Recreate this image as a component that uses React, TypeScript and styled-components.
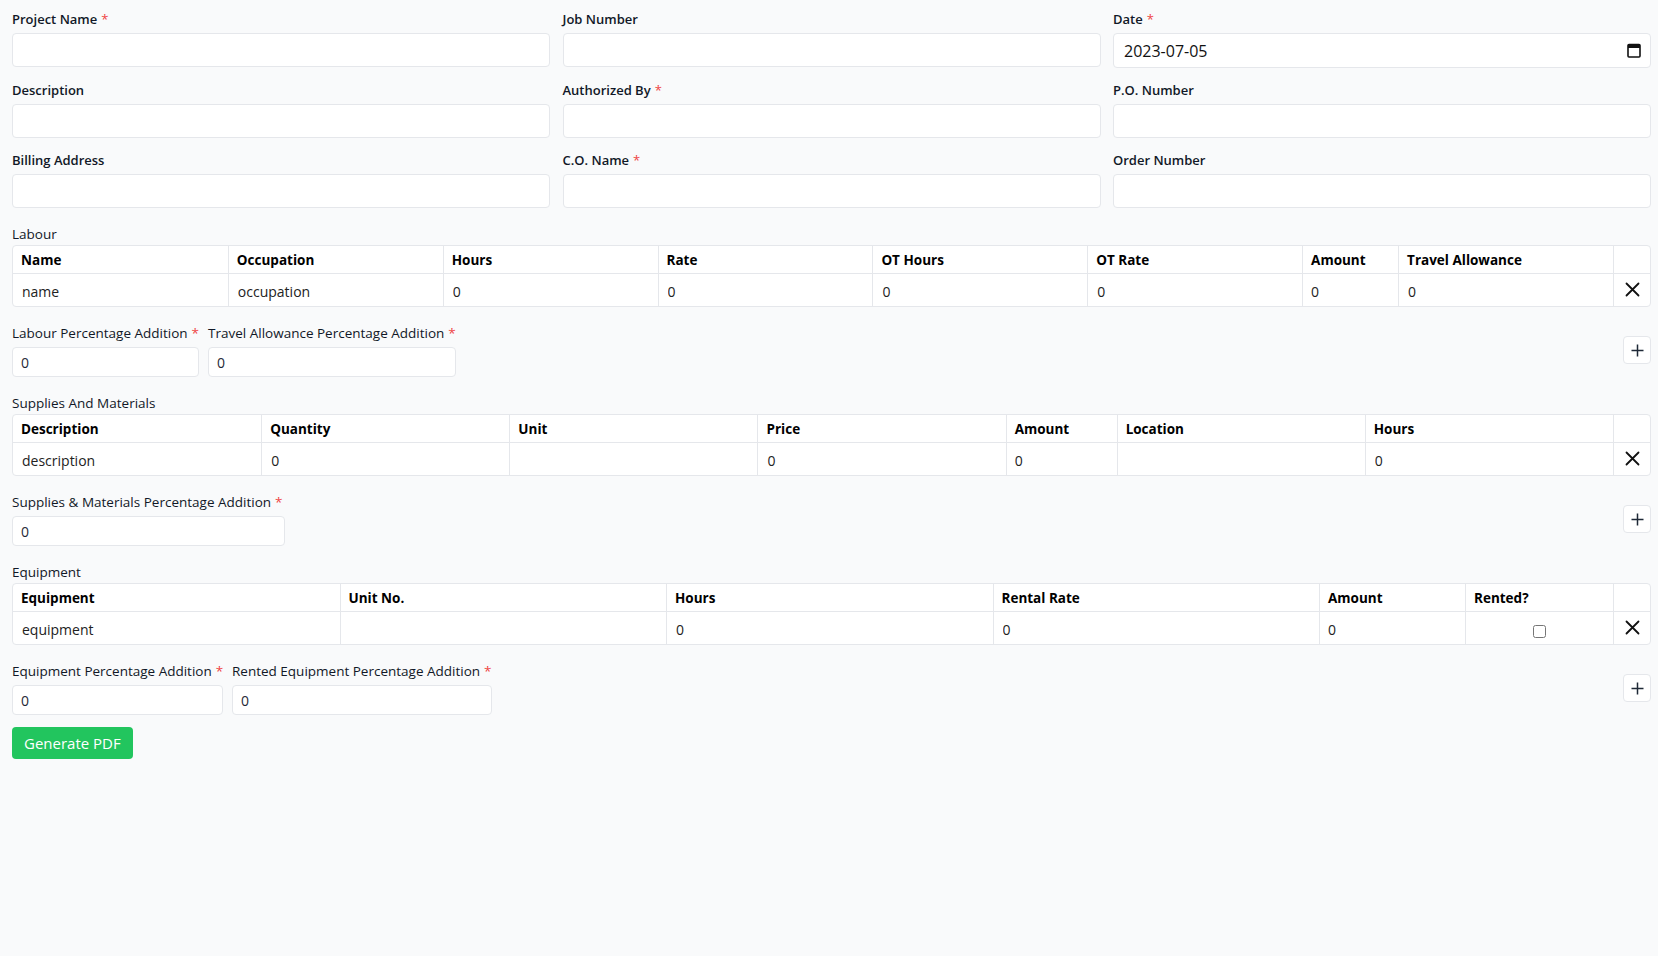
import React from 'react';
import styled, { createGlobalStyle } from 'styled-components';

const GlobalStyle = createGlobalStyle`
  html, body {
    margin: 0;
    padding: 0;
    background: #f9fafb;
  }
  body {
    font-family: 'Open Sans', 'Noto Sans', sans-serif;
    color: #111827;
  }
  * {
    box-sizing: border-box;
  }
`;

type Column = {
  label: string;
  kind: 'input' | 'text' | 'check' | 'remove';
  value?: string;
  width?: number;
};

const labourColumns: Column[] = [
  { label: 'Name', kind: 'input', value: 'name' },
  { label: 'Occupation', kind: 'input', value: 'occupation' },
  { label: 'Hours', kind: 'input', value: '0' },
  { label: 'Rate', kind: 'input', value: '0' },
  { label: 'OT Hours', kind: 'input', value: '0' },
  { label: 'OT Rate', kind: 'input', value: '0' },
  { label: 'Amount', kind: 'text', value: '0', width: 96 },
  { label: 'Travel Allowance', kind: 'input', value: '0' },
  { label: '', kind: 'remove', width: 37 },
];

const supplyColumns: Column[] = [
  { label: 'Description', kind: 'input', value: 'description' },
  { label: 'Quantity', kind: 'input', value: '0' },
  { label: 'Unit', kind: 'input', value: '' },
  { label: 'Price', kind: 'input', value: '0' },
  { label: 'Amount', kind: 'text', value: '0', width: 111 },
  { label: 'Location', kind: 'input', value: '' },
  { label: 'Hours', kind: 'input', value: '0' },
  { label: '', kind: 'remove', width: 37 },
];

const equipmentColumns: Column[] = [
  { label: 'Equipment', kind: 'input', value: 'equipment' },
  { label: 'Unit No.', kind: 'input', value: '' },
  { label: 'Hours', kind: 'input', value: '0' },
  { label: 'Rental Rate', kind: 'input', value: '0' },
  { label: 'Amount', kind: 'text', value: '0', width: 146 },
  { label: 'Rented?', kind: 'check', width: 148 },
  { label: '', kind: 'remove', width: 37 },
];

const CloseIcon = () => (
  <svg width="15" height="15" viewBox="0 0 15 15" fill="none">
    <path d="M1.5 1.5L13.5 13.5M13.5 1.5L1.5 13.5" stroke="#111" strokeWidth="1.8" strokeLinecap="round" />
  </svg>
);

const PlusIcon = () => (
  <svg width="13" height="13" viewBox="0 0 13 13" fill="none">
    <path d="M6.5 0.5V12.5M0.5 6.5H12.5" stroke="#1f2937" strokeWidth="1.5" />
  </svg>
);

const CalendarIcon = () => (
  <svg width="14" height="15" viewBox="0 0 14 15" fill="none">
    <rect x="1" y="1.5" width="12" height="12.5" rx="1" stroke="#111" strokeWidth="1.6" />
    <rect x="1" y="1.5" width="12" height="3.5" fill="#111" />
  </svg>
);

function DataTable({ columns }: { columns: Column[] }) {
  return (
    <Table>
      <colgroup>
        {columns.map((c, i) => (
          <Col key={i} $width={c.width} />
        ))}
      </colgroup>
      <thead>
        <tr>
          {columns.map((c, i) => (
            <HeadCell key={i}>{c.label}</HeadCell>
          ))}
        </tr>
      </thead>
      <tbody>
        <tr>
          {columns.map((c, i) => (
            <BodyCell key={i} $center={c.kind === 'check' || c.kind === 'remove'}>
              {c.kind === 'input' && <CellInput defaultValue={c.value} />}
              {c.kind === 'text' && <CellText>{c.value}</CellText>}
              {c.kind === 'check' && <CheckBox type="checkbox" />}
              {c.kind === 'remove' && (
                <IconButton type="button">
                  <CloseIcon />
                </IconButton>
              )}
            </BodyCell>
          ))}
        </tr>
      </tbody>
    </Table>
  );
}

function Addition({ label, width }: { label: string; width: number }) {
  return (
    <Field $width={width}>
      <LabelText $plain>
        {label}
        <Required>*</Required>
      </LabelText>
      <TextInput $small defaultValue="0" />
    </Field>
  );
}

export default function App() {
  return (
    <>
      <GlobalStyle />
      <Page onSubmit={(e) => e.preventDefault()}>
        <FieldGrid>
          <Field>
            <LabelText>
              Project Name<Required>*</Required>
            </LabelText>
            <TextInput />
          </Field>
          <Field>
            <LabelText>Job Number</LabelText>
            <TextInput />
          </Field>
          <Field>
            <LabelText>
              Date<Required>*</Required>
            </LabelText>
            <DateWrap>
              <DateInput defaultValue="2023-07-05" />
              <CalendarSlot>
                <CalendarIcon />
              </CalendarSlot>
            </DateWrap>
          </Field>
          <Field>
            <LabelText>Description</LabelText>
            <TextInput />
          </Field>
          <Field>
            <LabelText>
              Authorized By<Required>*</Required>
            </LabelText>
            <TextInput />
          </Field>
          <Field>
            <LabelText>P.O. Number</LabelText>
            <TextInput />
          </Field>
          <Field>
            <LabelText>Billing Address</LabelText>
            <TextInput />
          </Field>
          <Field>
            <LabelText>
              C.O. Name<Required>*</Required>
            </LabelText>
            <TextInput />
          </Field>
          <Field>
            <LabelText>Order Number</LabelText>
            <TextInput />
          </Field>
        </FieldGrid>

        <Section>
          <SectionTitle>Labour</SectionTitle>
          <DataTable columns={labourColumns} />
        </Section>
        <AdditionRow>
          <AdditionFields>
            <Addition label="Labour Percentage Addition" width={187} />
            <Addition label="Travel Allowance Percentage Addition" width={248} />
          </AdditionFields>
          <AddButton type="button">
            <PlusIcon />
          </AddButton>
        </AdditionRow>

        <Section>
          <SectionTitle>Supplies And Materials</SectionTitle>
          <DataTable columns={supplyColumns} />
        </Section>
        <AdditionRow>
          <AdditionFields>
            <Addition label="Supplies & Materials Percentage Addition" width={273} />
          </AdditionFields>
          <AddButton type="button">
            <PlusIcon />
          </AddButton>
        </AdditionRow>

        <Section>
          <SectionTitle>Equipment</SectionTitle>
          <DataTable columns={equipmentColumns} />
        </Section>
        <AdditionRow>
          <AdditionFields>
            <Addition label="Equipment Percentage Addition" width={211} />
            <Addition label="Rented Equipment Percentage Addition" width={260} />
          </AdditionFields>
          <AddButton type="button">
            <PlusIcon />
          </AddButton>
        </AdditionRow>

        <Actions>
          <PrimaryButton type="submit">Generate PDF</PrimaryButton>
        </Actions>
      </Page>
    </>
  );
}

const Page = styled.form`
  display: flex;
  flex-direction: column;
  gap: 16px;
  padding: 9px 7px 24px 12px;
  min-height: 956px;
`;

const FieldGrid = styled.div`
  display: grid;
  grid-template-columns: repeat(3, 1fr);
  column-gap: 12.5px;
  row-gap: 12px;
`;

const Field = styled.label<{ $width?: number }>`
  display: flex;
  flex-direction: column;
  gap: 4px;
  width: ${(p) => (p.$width ? `${p.$width}px` : 'auto')};
`;

const LabelText = styled.span<{ $plain?: boolean }>`
  font-size: ${(p) => (p.$plain ? '13.5px' : '13px')};
  line-height: 20px;
  font-weight: ${(p) => (p.$plain ? 400 : 600)};
  color: #111827;
  white-space: nowrap;
`;

const Required = styled.span`
  color: #ef4444;
  font-weight: 400;
  margin-left: 4px;
`;

const TextInput = styled.input<{ $small?: boolean }>`
  width: 100%;
  height: ${(p) => (p.$small ? '30px' : '34px')};
  padding: 0 8px;
  border: 1px solid #e5e7eb;
  border-radius: 4px;
  background: #fff;
  font-family: inherit;
  font-size: 14px;
  color: #1f2937;
  outline: none;
`;

const DateWrap = styled.div`
  position: relative;
`;

const DateInput = styled(TextInput)`
  height: 35px;
  padding: 0 10px;
  font-size: 16px;
  color: #111;
`;

const CalendarSlot = styled.span`
  position: absolute;
  right: 10px;
  top: 10px;
  display: flex;
  pointer-events: none;
`;

const Section = styled.section`
  display: flex;
  flex-direction: column;
  gap: 1px;
`;

const SectionTitle = styled.div`
  font-size: 13.5px;
  line-height: 20px;
  color: #111827;
`;

const Table = styled.table`
  width: 100%;
  table-layout: fixed;
  border-collapse: separate;
  border-spacing: 0;
  background: #fff;
  border: 1px solid #e5e7eb;
  border-radius: 4px;
`;

const Col = styled.col<{ $width?: number }>`
  width: ${(p) => (p.$width ? `${p.$width}px` : 'auto')};
`;

const HeadCell = styled.th`
  height: 28px;
  padding: 0 8px;
  text-align: left;
  font-size: 13.5px;
  line-height: 20px;
  font-weight: 700;
  color: #000;
  border-bottom: 1px solid #e5e7eb;
  white-space: nowrap;
  & + & {
    border-left: 1px solid #e5e7eb;
  }
`;

const BodyCell = styled.td<{ $center?: boolean }>`
  height: 32px;
  padding: 3px 8px 0;
  font-size: 14px;
  text-align: ${(p) => (p.$center ? 'center' : 'left')};
  vertical-align: middle;
  & + & {
    border-left: 1px solid #e5e7eb;
  }
`;

const CellInput = styled.input`
  width: 100%;
  border: none;
  padding: 0 0 0 1px;
  background: transparent;
  font-family: inherit;
  font-size: 14px;
  line-height: 20px;
  color: #222;
  outline: none;
`;

const CellText = styled.span`
  font-size: 14px;
  color: #222;
`;

const CheckBox = styled.input`
  width: 13px;
  height: 13px;
  margin: 0;
  vertical-align: middle;
`;

const IconButton = styled.button`
  display: inline-flex;
  align-items: center;
  justify-content: center;
  border: none;
  background: none;
  padding: 0;
  cursor: pointer;
`;

const AdditionRow = styled.div`
  display: flex;
  align-items: center;
  justify-content: space-between;
`;

const AdditionFields = styled.div`
  display: flex;
  gap: 9px;
`;

const AddButton = styled.button`
  width: 28px;
  height: 28px;
  display: flex;
  align-items: center;
  justify-content: center;
  padding: 0;
  background: #fff;
  border: 1px solid #e5e7eb;
  border-radius: 4px;
  cursor: pointer;
`;

const Actions = styled.div`
  display: flex;
  margin-top: -4px;
`;

const PrimaryButton = styled.button`
  height: 32px;
  padding: 0 12px;
  border: none;
  border-radius: 4px;
  background: #22c55e;
  color: #fff;
  font-family: inherit;
  font-size: 15px;
  font-weight: 400;
  cursor: pointer;
`;
